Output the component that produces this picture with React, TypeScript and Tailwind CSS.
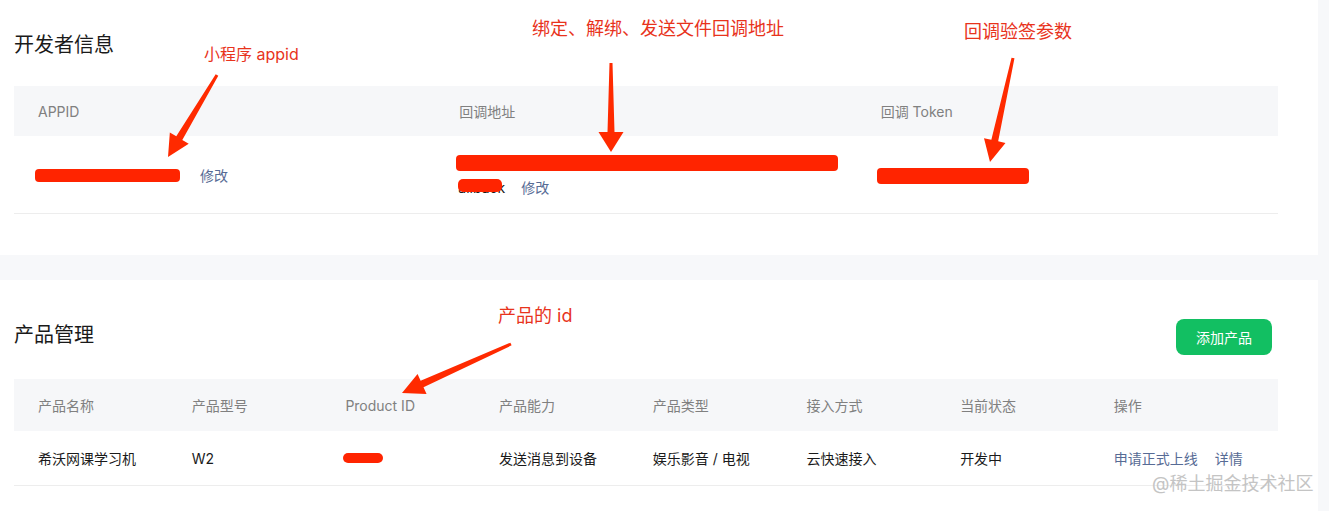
import type { ReactNode } from 'react';

const FONT = '"Inter", "Noto Sans CJK SC", sans-serif';

type Pt = [number, number];

// tapered annotation arrow, thin at the tail and with a wide head at the tip
const arrowPoints = (tail: Pt, tip: Pt, headLen = 20, headHalf = 12): string => {
  const dx = tip[0] - tail[0];
  const dy = tip[1] - tail[1];
  const len = Math.hypot(dx, dy);
  const ux = dx / len;
  const uy = dy / len;
  const nx = -uy;
  const ny = ux;
  const neck: Pt = [tip[0] - ux * headLen, tip[1] - uy * headLen];
  const p = (base: Pt, w: number): string => `${base[0] + nx * w},${base[1] + ny * w}`;
  return [
    p(tail, 1.5),
    p(neck, 3.5),
    p(neck, headHalf),
    `${tip[0]},${tip[1]}`,
    p(neck, -headHalf),
    p(neck, -3.5),
    p(tail, -1.5),
  ].join(' ');
};

const arrows: { tail: Pt; tip: Pt; len?: number; half?: number }[] = [
  { tail: [217, 75], tip: [168, 157], len: 22, half: 11 },
  { tail: [611, 63], tip: [611, 152], len: 20, half: 12.5 },
  { tail: [1013, 58], tip: [990, 162], len: 22, half: 11 },
  { tail: [511, 344], tip: [402, 393], len: 22, half: 11 },
];

const Redact = ({ className }: { className: string }) => (
  <span className={`block rounded-[4px] bg-[#ff2400] ${className}`} />
);

const EditLink = ({ children }: { children: ReactNode }) => (
  <span className="text-[14px] text-[#576b95]">{children}</span>
);

const productHeaders = ['产品名称', '产品型号', 'Product ID', '产品能力', '产品类型', '接入方式', '当前状态', '操作'];

export default function App() {
  return (
    <div className="relative h-[511px] w-full overflow-hidden bg-[#f7f8fa]" style={{ fontFamily: FONT }}>
      <div className="flex h-full w-[1318px] flex-col gap-[25px]">
        {/* developer info */}
        <section className="h-[255px] shrink-0 bg-white px-[14px] pt-[31px]">
          <h2 className="text-[20px] leading-[28px] text-[#1a1a1a]">开发者信息</h2>
          <div className="mt-[27px] w-[1264px]">
            <div className="grid h-[50px] grid-cols-3 items-center bg-[#f6f7f9] text-[14px] text-[#808080]">
              <div className="pl-[24px]">APPID</div>
              <div className="pl-[24px]">回调地址</div>
              <div className="pl-[24px]">回调 Token</div>
            </div>
            <div className="grid h-[78px] grid-cols-3 border-b border-[#ededed]">
              <div className="flex items-center gap-[20px] pl-[21px] pt-[2px]">
                <Redact className="h-[13px] w-[145px]" />
                <EditLink>修改</EditLink>
              </div>
              <div className="flex flex-col pl-[21px] pt-[19px]">
                <Redact className="h-[16px] w-[382px]" />
                <div className="mt-[6px] flex items-center gap-[16px] pl-[2px]">
                  <span className="relative whitespace-nowrap text-[14px] leading-[18px] text-[#1a1a1a]">
                    allback
                    <span className="absolute left-0 top-0 h-[13px] w-[44px] rounded-[5px] bg-[#ff2400]" />
                  </span>
                  <EditLink>修改</EditLink>
                </div>
              </div>
              <div className="flex items-center pl-[20px] pt-[3px]">
                <Redact className="h-[16px] w-[152px]" />
              </div>
            </div>
          </div>
        </section>

        {/* product management */}
        <section className="flex-1 bg-white px-[14px] pt-[39px]">
          <div className="flex w-[1264px] items-start justify-between">
            <h2 className="mt-[2px] text-[20px] leading-[28px] text-[#1a1a1a]">产品管理</h2>
            <button
              type="button"
              className="mr-[6px] h-[36px] w-[96px] rounded-[8px] bg-[#12bf62] text-[14px] text-white"
            >
              添加产品
            </button>
          </div>
          <div className="mt-[24px] w-[1264px]">
            <div className="grid h-[52px] grid-cols-[24px_repeat(7,153.7px)_1fr] items-center bg-[#f6f7f9] text-[14px] text-[#808080]">
              <div />
              {productHeaders.map((h) => (
                <div key={h}>{h}</div>
              ))}
            </div>
            <div className="grid h-[55px] grid-cols-[24px_repeat(7,153.7px)_1fr] items-center border-b border-[#ededed] text-[14px] text-[#1a1a1a]">
              <div />
              <div>希沃网课学习机</div>
              <div>W2</div>
              <div>
                <Redact className="h-[10px] w-[40px] -translate-x-[2px] rounded-full" />
              </div>
              <div>发送消息到设备</div>
              <div>娱乐影音 / 电视</div>
              <div>云快速接入</div>
              <div>开发中</div>
              <div className="flex gap-[17px] text-[#576b95]">
                <span>申请正式上线</span>
                <span>详情</span>
              </div>
            </div>
          </div>
        </section>
      </div>

      {/* annotations drawn on top of the screenshot */}
      <svg className="pointer-events-none absolute left-0 top-0" width={1329} height={511}>
        {arrows.map((a, i) => (
          <polygon key={i} points={arrowPoints(a.tail, a.tip, a.len, a.half)} fill="#ff2a00" strokeLinejoin="round" />
        ))}
      </svg>
      <span className="absolute left-[204px] top-[42px] text-[16px] leading-[24px] text-[#e8331c]">小程序 appid</span>
      <span className="absolute left-[532px] top-[17px] text-[18px] leading-[24px] text-[#e8331c]">绑定、解绑、发送文件回调地址</span>
      <span className="absolute left-[964px] top-[20px] text-[18px] leading-[24px] text-[#e8331c]">回调验签参数</span>
      <span className="absolute left-[498px] top-[304px] text-[18px] leading-[24px] text-[#e8331c]">产品的 id</span>
      <span className="absolute left-[1152px] top-[472px] text-[18px] leading-[24px] text-[#c4c4c4]">@稀土掘金技术社区</span>
    </div>
  );
}
